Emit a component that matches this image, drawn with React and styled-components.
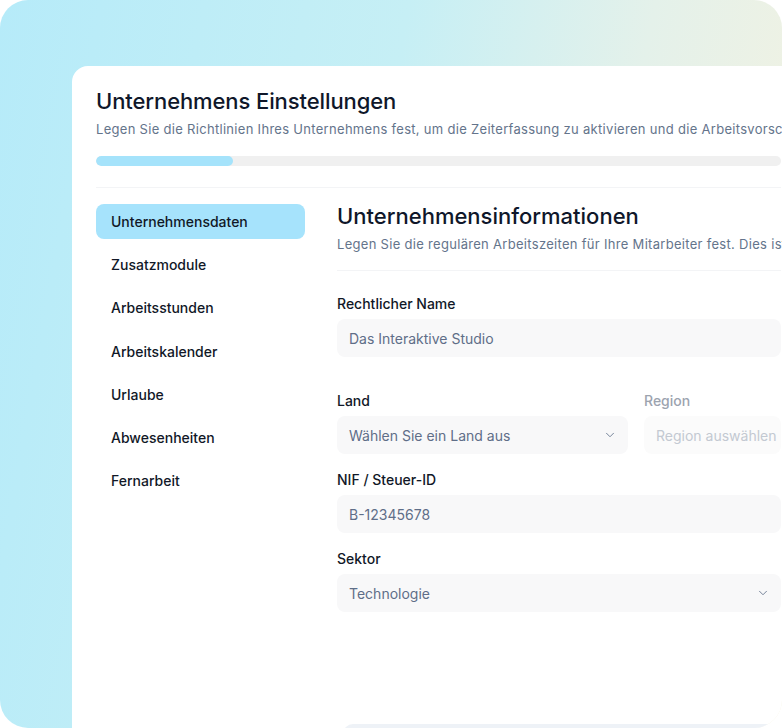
import React from "react";
import styled, { createGlobalStyle } from "styled-components";
import { ChevronDown } from "lucide-react";

const GlobalStyle = createGlobalStyle`
  body {
    margin: 0;
    background: #ffffff;
    font-family: Inter, "Noto Sans", sans-serif;
    overflow: hidden;
  }
  * { box-sizing: border-box; }
`;

const Backdrop = styled.div`
  width: 782px;
  height: 728px;
  border-radius: 28px;
  overflow: hidden;
  padding: 66px 0 0 72px;
  background: linear-gradient(100deg, #b6ebf9 0%, #c6eff5 45%, #e4f1ea 72%, #f5f2e0 100%);
`;

const Card = styled.div`
  width: 733px;
  min-height: 700px;
  background: #ffffff;
  border-radius: 16px 16px 0 0;
  padding: 21px 24px 0;
`;

const Title = styled.h1`
  margin: 0;
  font-size: 22px;
  line-height: 28px;
  font-weight: 500;
  color: #0f172a;
  letter-spacing: -0.1px;
`;

const Subtitle = styled.p`
  margin: ${(p) => p.$mt || "4px"} 0 0;
  font-size: 13px;
  line-height: 20px;
  color: #64748b;
  white-space: nowrap;
  letter-spacing: 0.3px;
`;

const Track = styled.div`
  margin-top: 17px;
  height: 10px;
  border-radius: 5px;
  background: #f0f0f0;
  overflow: hidden;
`;

const Fill = styled.div`
  height: 100%;
  border-radius: 5px;
  background: #a5e3fb;
`;

const Divider = styled.div`
  height: 1px;
  background: #f3f4f6;
  margin: ${(p) => p.$m};
`;

const Body = styled.div`
  display: grid;
  grid-template-columns: 209px 1fr;
  column-gap: 32px;
`;

const Nav = styled.nav`
  display: flex;
  flex-direction: column;
  gap: 8.2px;
`;

const NavItem = styled.div`
  height: 35px;
  display: flex;
  align-items: center;
  padding: 0 15px;
  border-radius: 8px;
  font-size: 14px;
  font-weight: 500;
  color: #111827;
  background: ${(p) => (p.$active ? "#a6e3fc" : "transparent")};
`;

const Main = styled.section`
  min-width: 0;
`;

const SectionTitle = styled.h2`
  margin: 0;
  font-size: 22px;
  line-height: 24px;
  font-weight: 500;
  color: #0f172a;
`;

const Form = styled.div`
  display: flex;
  flex-direction: column;
  gap: 16px;
`;

const Row = styled.div`
  display: grid;
  grid-template-columns: 291px 1fr;
  column-gap: 16px;
  margin-top: ${(p) => p.$mt || "0"};
`;

const Field = styled.div`
  display: flex;
  flex-direction: column;
  gap: 5px;
  min-width: 0;
`;

const Label = styled.label`
  font-size: 14px;
  line-height: 20px;
  font-weight: 500;
  color: ${(p) => (p.$muted ? "#9ca3af" : "#111827")};
`;

const Input = styled.div`
  height: 38px;
  display: flex;
  align-items: center;
  justify-content: space-between;
  padding: 0 11px 0 12px;
  border-radius: 8px;
  background: ${(p) => (p.$muted ? "#fbfbfb" : "#f8f8f9")};
  font-size: 14px;
  color: ${(p) => (p.$muted ? "#c3c9d2" : "#5f6e88")};
  white-space: nowrap;
  overflow: hidden;
`;

const Footer = styled.div`
  margin: 112px 0 0 6px;
  height: 40px;
  border-radius: 10px;
  background: #eef2f7;
`;

const navItems = [
  "Unternehmensdaten",
  "Zusatzmodule",
  "Arbeitsstunden",
  "Arbeitskalender",
  "Urlaube",
  "Abwesenheiten",
  "Fernarbeit",
];

const App = () => {
  return (
    <>
      <GlobalStyle />
      <Backdrop>
        <Card>
          <Title>Unternehmens Einstellungen</Title>
          <Subtitle>
            Legen Sie die Richtlinien Ihres Unternehmens fest, um die Zeiterfassung zu aktivieren und die Arbeitsvorschriften einzuhalten.
          </Subtitle>
          <Track>
            <Fill style={{ width: "20%" }} />
          </Track>
          <Divider $m="21px 0 16px" />
          <Body>
            <Nav>
              {navItems.map((item, i) => (
                <NavItem key={item} $active={i === 0}>
                  {item}
                </NavItem>
              ))}
            </Nav>
            <Main>
              <SectionTitle>Unternehmensinformationen</SectionTitle>
              <Subtitle $mt="6px">
                Legen Sie die regulären Arbeitszeiten für Ihre Mitarbeiter fest. Dies ist die Grundlage für die Zeiterfassung.
              </Subtitle>
              <Divider $m="16px 0 23px" />
              <Form>
                <Field>
                  <Label>Rechtlicher Name</Label>
                  <Input>Das Interaktive Studio</Input>
                </Field>
                <Row $mt="18px">
                  <Field>
                    <Label>Land</Label>
                    <Input>
                      Wählen Sie ein Land aus
                      <ChevronDown size={14} strokeWidth={1.5} color="#64748b" />
                    </Input>
                  </Field>
                  <Field>
                    <Label $muted>Region</Label>
                    <Input $muted>Region auswählen</Input>
                  </Field>
                </Row>
                <Field>
                  <Label>NIF / Steuer-ID</Label>
                  <Input>B-12345678</Input>
                </Field>
                <Field>
                  <Label>Sektor</Label>
                  <Input>
                    Technologie
                    <ChevronDown size={14} strokeWidth={1.5} color="#64748b" />
                  </Input>
                </Field>
              </Form>
              <Footer />
            </Main>
          </Body>
        </Card>
      </Backdrop>
    </>
  );
};

export default App;
